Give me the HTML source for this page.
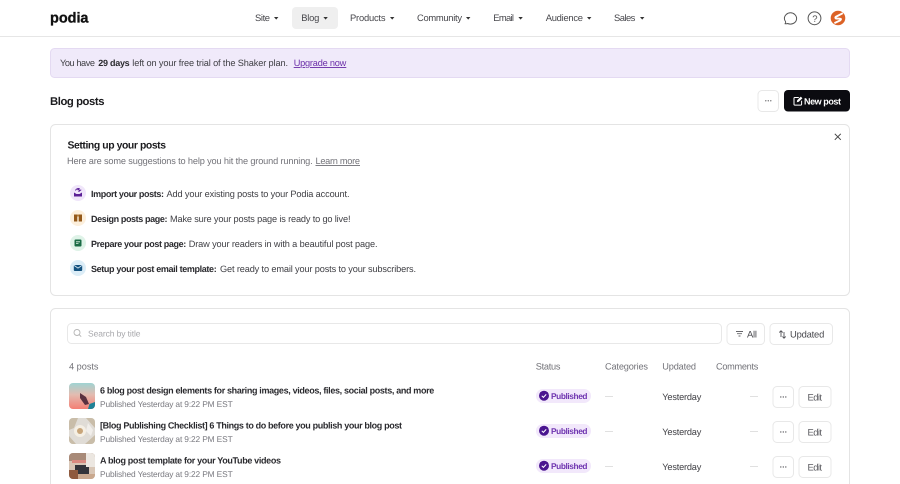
<!DOCTYPE html>
<html lang="en">
<head>
<meta charset="utf-8">
<title>Blog posts</title>
<style>
html,body{margin:0;padding:0;width:900px;height:484px;overflow:hidden;background:#fff}
svg{display:block}
text{font-family:"Liberation Sans",sans-serif;font-size:9.2px;fill:#3f3f44;text-rendering:geometricPrecision}
text.b{font-weight:700;font-size:9px;fill:#2a2a2e}
text.n{fill:#48484d;font-size:9.4px}
text.g{fill:#737379}
.btn{fill:#fff;stroke:#e8e8e8;stroke-width:1}
.dash{stroke:#e0e0e0;stroke-width:1}
text.pub{fill:#6f35b0;font-weight:700;font-size:8.300px}
text.ed{fill:#5a5a5f;font-size:9.400px}
text.s{font-size:8.400px;fill:#7a7a80}
.dot{fill:#66666a}
</style>
</head>
<body>
<svg width="900" height="484" viewBox="0 0 900 484" xmlns="http://www.w3.org/2000/svg">
<rect width="900" height="484" fill="#fff"/>

<!-- header -->
<text x="50" y="22.500" textLength="38.500" lengthAdjust="spacing" style="font-size:14.500px;font-weight:700;fill:#111;stroke:#111;stroke-width:.3">podia</text>
<rect x="292" y="7" width="46" height="22" rx="4" fill="#efefef"/>
<rect y="36" width="900" height="1" fill="#e6e6e6"/>
<g>
<text class="n" x="255" y="21.200" textLength="15" lengthAdjust="spacing">Site</text><path d="M274 17h4.400l-2.200 2.600z" fill="#333"/>
<text class="n" x="301.300" y="21.200" textLength="18" lengthAdjust="spacing">Blog</text><path d="M323.400 17h4.400l-2.200 2.600z" fill="#333"/>
<text class="n" x="350" y="21.200" textLength="35.500" lengthAdjust="spacing">Products</text><path d="M390 17h4.400l-2.200 2.600z" fill="#333"/>
<text class="n" x="417" y="21.200" textLength="45" lengthAdjust="spacing">Community</text><path d="M466 17h4.400l-2.200 2.600z" fill="#333"/>
<text class="n" x="493.300" y="21.200" textLength="20.700" lengthAdjust="spacing">Email</text><path d="M518.400 17h4.400l-2.200 2.600z" fill="#333"/>
<text class="n" x="545.700" y="21.200" textLength="37.300" lengthAdjust="spacing">Audience</text><path d="M587 17h4.400l-2.200 2.600z" fill="#333"/>
<text class="n" x="614" y="21.200" textLength="21.300" lengthAdjust="spacing">Sales</text><path d="M640 17h4.400l-2.200 2.600z" fill="#333"/>
</g>
<path d="M785.200 23.700c.6-.7.6-1.500.3-2.200-.7-.9-1.100-1.900-1.100-3 0-3.200 2.800-5.700 6.100-5.700s6.100 2.500 6.100 5.700-2.800 5.600-6.100 5.600c-1 0-2-.2-2.800-.6-.7.300-1.500.400-2.500.2z" fill="none" stroke="#555" stroke-width="1"/>
<circle cx="814.500" cy="18.300" r="6.400" fill="none" stroke="#555" stroke-width="1"/>
<text x="812.200" y="21.800" style="font-size:9.500px;fill:#555">?</text>
<circle cx="838" cy="18" r="7.300" fill="#dc6226"/>
<path d="M842.800 13.200l-6.600 3.400c-1.400.8-.8 2 .6 2l3.200.1c1.200 0 1.300 1 .2 1.700l-5.800 2.700" fill="none" stroke="#fff" stroke-width="1.900"/>

<!-- banner -->
<rect x="50.500" y="48.500" width="799" height="29" rx="4" fill="#f0eafa" stroke="#e4daf2"/>
<text x="60" y="66" textLength="35" lengthAdjust="spacing">You have</text>
<text class="b" x="98.300" y="66" textLength="31.400" lengthAdjust="spacing">29 days</text>
<text x="132.300" y="66" textLength="155.700" lengthAdjust="spacing">left on your free trial of the Shaker plan.</text>
<text x="293.700" y="66" textLength="52.600" lengthAdjust="spacing" style="fill:#6b2fa8" text-decoration="underline">Upgrade now</text>

<!-- page title -->
<text x="50" y="105" textLength="54.500" lengthAdjust="spacing" style="font-size:11.300px;font-weight:700;fill:#1c1c1f">Blog posts</text>
<rect class="btn" x="758" y="90.500" width="20.500" height="21" rx="4"/>
<circle class="dot" cx="765.800" cy="100.800" r=".7"/><circle class="dot" cx="768.300" cy="100.800" r=".7"/><circle class="dot" cx="770.800" cy="100.800" r=".7"/>
<rect x="784" y="90" width="66" height="21.500" rx="4" fill="#0b0b10"/>
<path d="M798.800 97.500h-4a.8.8 0 0 0-.8.800v6a.8.8 0 0 0 .8.800h6a.8.8 0 0 0 .8-.8v-3.600" fill="none" stroke="#fff" stroke-width="1"/>
<path d="M796.800 102.200l.4-2 3.600-3.600 1.600 1.600-3.600 3.600z" fill="#fff"/>
<text x="804" y="104.300" textLength="37" lengthAdjust="spacing" style="fill:#fff;font-weight:700;font-size:9px">New post</text>

<!-- setup card -->
<rect x="50.500" y="124.500" width="799" height="171" rx="5" fill="#fff" stroke="#e4e4e4"/>
<text x="67.500" y="148.700" textLength="98.500" lengthAdjust="spacing" style="font-size:10.400px;font-weight:700;fill:#1c1c1f">Setting up your posts</text>
<text class="g" x="67" y="164" textLength="245.700" lengthAdjust="spacing">Here are some suggestions to help you hit the ground running.</text>
<text class="g" x="315.500" y="164" textLength="44.500" lengthAdjust="spacing" text-decoration="underline">Learn more</text>
<path d="M834.800 133.800l6 6M840.800 133.800l-6 6" stroke="#444" stroke-width="1" fill="none"/>

<circle cx="78" cy="193" r="8" fill="#f0e6fa"/>
<path d="M74 192.500l2.500 1.500h3l2.500-1.500v4h-8z" fill="#5b1f96"/><path d="M75.500 190.500c.5-1.500 2-2 3.500-2l-1 1.200 2.500.5-2 1.500" fill="none" stroke="#5b1f96" stroke-width="1"/>
<text class="b" x="91" y="197" textLength="73" lengthAdjust="spacing">Import your posts:</text>
<text x="166.500" y="197" textLength="183" lengthAdjust="spacing">Add your existing posts to your Podia account.</text>

<circle cx="78" cy="218" r="8" fill="#fcefdc"/>
<rect x="74" y="214.500" width="3.300" height="7" fill="#94591a"/><rect x="78.700" y="214.500" width="3.300" height="7" fill="#94591a"/><rect x="77" y="214.500" width="2" height="2" fill="#b27a35"/>
<text class="b" x="91" y="222" textLength="76.500" lengthAdjust="spacing">Design posts page:</text>
<text x="170" y="222" textLength="180.500" lengthAdjust="spacing">Make sure your posts page is ready to go live!</text>

<circle cx="78" cy="243" r="8" fill="#dff3e8"/>
<rect x="74.500" y="239.500" width="7" height="7" rx="1" fill="#1a6b45"/><path d="M76 241.800h4M76 243.500h2.500" stroke="#dff3e8" stroke-width=".8"/>
<text class="b" x="91" y="247" textLength="95.300" lengthAdjust="spacing">Prepare your post page:</text>
<text x="188.700" y="247" textLength="188.800" lengthAdjust="spacing">Draw your readers in with a beautiful post page.</text>

<circle cx="78" cy="268" r="8" fill="#dcedf7"/>
<rect x="73.800" y="265" width="8.400" height="6" rx="1" fill="#14527f"/><path d="M74.200 265.500l3.800 2.600 3.800-2.600" fill="none" stroke="#dcedf7" stroke-width=".8"/>
<text class="b" x="91" y="272" textLength="125.700" lengthAdjust="spacing">Setup your post email template:</text>
<text x="220" y="272" textLength="196" lengthAdjust="spacing">Get ready to email your posts to your subscribers.</text>

<!-- list card -->
<rect x="50.500" y="308.500" width="799" height="190" rx="5" fill="#fff" stroke="#e4e4e4"/>
<rect class="btn" x="67.500" y="323.500" width="654" height="20" rx="4"/>
<circle cx="77" cy="332.500" r="3" fill="none" stroke="#b5b5b5" stroke-width=".9"/><path d="M79.200 334.700l2 2" stroke="#b5b5b5" stroke-width=".9"/>
<text x="88" y="336.300" textLength="52.500" lengthAdjust="spacing" style="font-size:8.500px;fill:#a8a8ac">Search by title</text>
<rect class="btn" x="727" y="323.500" width="37.500" height="21" rx="4"/>
<path d="M736 331.500h7M737 333.700h5M738.500 336h2" stroke="#66666a" stroke-width=".9" fill="none"/>
<text class="n" x="747" y="337.300" textLength="10" lengthAdjust="spacing">All</text>
<rect class="btn" x="770" y="323.500" width="62.500" height="21" rx="4"/>
<path d="M781 337v-6M779.300 332.500l1.700-1.700 1.700 1.700M784 332v6M782.400 336.500l1.600 1.700 1.700-1.700" stroke="#55555a" stroke-width=".9" fill="none"/>
<text class="n" x="790" y="337.300" textLength="34.300" lengthAdjust="spacing">Updated</text>

<text class="g" x="69" y="369.500" textLength="29.500" lengthAdjust="spacing">4 posts</text>
<text class="g" x="535.700" y="369.500" textLength="24.800" lengthAdjust="spacing">Status</text>
<text class="g" x="605" y="369.500" textLength="43" lengthAdjust="spacing">Categories</text>
<text class="g" x="662.300" y="369.500" textLength="33.700" lengthAdjust="spacing">Updated</text>
<text class="g" x="716" y="369.500" textLength="42.300" lengthAdjust="spacing">Comments</text>

<defs>
<linearGradient id="t1" x1="0" y1="0" x2="0" y2="1"><stop offset="0" stop-color="#9fd3d2"/><stop offset=".45" stop-color="#e3bbb0"/><stop offset="1" stop-color="#f47f74"/></linearGradient>
<clipPath id="c1"><rect x="69" y="383" width="26" height="26" rx="4"/></clipPath>
<clipPath id="c2"><rect x="69" y="418" width="26" height="26" rx="4"/></clipPath>
<clipPath id="c3"><rect x="69" y="453" width="26" height="26" rx="4"/></clipPath>
</defs>

<!-- row 1 -->
<g clip-path="url(#c1)">
<rect x="69" y="383" width="26" height="26" fill="url(#t1)"/>
<path d="M80 393l6 4 3 7-4 1-5-7z" fill="#5a3140"/>
<path d="M88 409l1.500-5 5.500-2v7z" fill="#1f8196"/>
</g>
<text class="b" x="100" y="393.500" textLength="334.300" lengthAdjust="spacing">6 blog post design elements for sharing images, videos, files, social posts, and more</text>
<text class="s" x="100" y="407" textLength="132.700" lengthAdjust="spacing">Published Yesterday at 9:22 PM EST</text>
<rect x="536" y="389" width="55" height="14" rx="7" fill="#f2e8fb"/>
<circle cx="544" cy="395.700" r="5" fill="#4a1590"/><path d="M541.800 395.800l1.600 1.600 2.800-3" fill="none" stroke="#fff" stroke-width="1"/>
<text class="pub" x="551" y="398.800" textLength="36.500" lengthAdjust="spacing">Published</text>
<path class="dash" d="M605 396.500h8"/>
<text x="662.300" y="400" textLength="39" lengthAdjust="spacing">Yesterday</text>
<path class="dash" d="M750 396.500h8"/>
<rect class="btn" x="773" y="386.500" width="20.500" height="21" rx="4"/>
<circle class="dot" cx="780.800" cy="397" r=".7"/><circle class="dot" cx="783.300" cy="397" r=".7"/><circle class="dot" cx="785.800" cy="397" r=".7"/>
<rect class="btn" x="799" y="386.500" width="32" height="21" rx="4"/>
<text class="ed" x="807.500" y="400.300" textLength="14.500" lengthAdjust="spacing">Edit</text>

<!-- row 2 -->
<g clip-path="url(#c2)">
<rect x="69" y="418" width="26" height="26" fill="#e0dcd6"/>
<path d="M69 418h9l-4 10-5 2zM86 418h9v10zM69 436l7 8h-7zM85 444l10-9v9z" fill="#c9bda9"/>
<circle cx="80" cy="431" r="6" fill="#f5efe4"/><circle cx="80" cy="431" r="3" fill="#c8a57a"/>
<path d="M88 423l5 7-2 6-5-5z" fill="#f1eeea"/>
</g>
<text class="b" x="100" y="428.500" textLength="302" lengthAdjust="spacing">[Blog Publishing Checklist] 6 Things to do before you publish your blog post</text>
<text class="s" x="100" y="442" textLength="132.700" lengthAdjust="spacing">Published Yesterday at 9:22 PM EST</text>
<rect x="536" y="424" width="55" height="14" rx="7" fill="#f2e8fb"/>
<circle cx="544" cy="430.700" r="5" fill="#4a1590"/><path d="M541.800 430.800l1.600 1.600 2.800-3" fill="none" stroke="#fff" stroke-width="1"/>
<text class="pub" x="551" y="433.800" textLength="36.500" lengthAdjust="spacing">Published</text>
<path class="dash" d="M605 431.500h8"/>
<text x="662.300" y="435" textLength="39" lengthAdjust="spacing">Yesterday</text>
<path class="dash" d="M750 431.500h8"/>
<rect class="btn" x="773" y="421.500" width="20.500" height="21" rx="4"/>
<circle class="dot" cx="780.800" cy="432" r=".7"/><circle class="dot" cx="783.300" cy="432" r=".7"/><circle class="dot" cx="785.800" cy="432" r=".7"/>
<rect class="btn" x="799" y="421.500" width="32" height="21" rx="4"/>
<text class="ed" x="807.500" y="435.300" textLength="14.500" lengthAdjust="spacing">Edit</text>

<!-- row 3 -->
<g clip-path="url(#c3)">
<rect x="69" y="453" width="26" height="26" fill="#d8c6b6"/>
<rect x="69" y="453" width="26" height="8" fill="#a88a78"/>
<rect x="72" y="460" width="14" height="3" fill="#d98a80"/>
<rect x="75" y="465" width="14" height="9" fill="#33343a"/>
<rect x="69" y="470" width="9" height="9" fill="#8f5a3e"/>
<rect x="86" y="453" width="9" height="14" fill="#ece7e1"/>
<rect x="78" y="474" width="17" height="5" fill="#c9a88e"/>
</g>
<text class="b" x="100" y="463.500" textLength="181" lengthAdjust="spacing">A blog post template for your YouTube videos</text>
<text class="s" x="100" y="477" textLength="132.700" lengthAdjust="spacing">Published Yesterday at 9:22 PM EST</text>
<rect x="536" y="459" width="55" height="14" rx="7" fill="#f2e8fb"/>
<circle cx="544" cy="465.700" r="5" fill="#4a1590"/><path d="M541.800 465.800l1.600 1.600 2.800-3" fill="none" stroke="#fff" stroke-width="1"/>
<text class="pub" x="551" y="468.800" textLength="36.500" lengthAdjust="spacing">Published</text>
<path class="dash" d="M605 466.500h8"/>
<text x="662.300" y="470" textLength="39" lengthAdjust="spacing">Yesterday</text>
<path class="dash" d="M750 466.500h8"/>
<rect class="btn" x="773" y="456.500" width="20.500" height="21" rx="4"/>
<circle class="dot" cx="780.800" cy="467" r=".7"/><circle class="dot" cx="783.300" cy="467" r=".7"/><circle class="dot" cx="785.800" cy="467" r=".7"/>
<rect class="btn" x="799" y="456.500" width="32" height="21" rx="4"/>
<text class="ed" x="807.500" y="470.300" textLength="14.500" lengthAdjust="spacing">Edit</text>
</svg>
</body>
</html>
